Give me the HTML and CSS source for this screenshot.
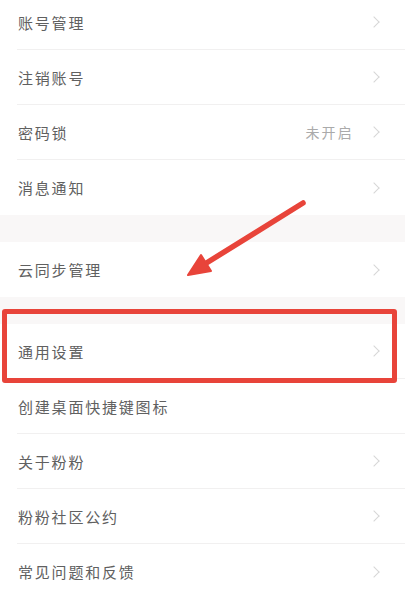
FILE: index.html
```html
<!DOCTYPE html>
<html lang="zh">
<head>
    <meta charset="UTF-8">
    <meta name="viewport" content="width=device-width, initial-scale=1.0">
    <title>设置</title>
    <link rel="stylesheet" href="styles.css">
</head>
<body>

    <div class="page">
        <div class="group first">
            <div class="row"><span class="label">账号管理</span><span class="chev"></span></div>
            <div class="row"><span class="label">注销账号</span><span class="chev"></span></div>
            <div class="row"><span class="label">密码锁</span><span class="value">未开启</span><span class="chev"></span></div>
            <div class="row"><span class="label">消息通知</span><span class="chev"></span></div>
        </div>

        <div class="gap"></div>

        <div class="group">
            <div class="row"><span class="label">云同步管理</span><span class="chev"></span></div>
        </div>

        <div class="gap"></div>

        <div class="group">
            <div class="row"><span class="label">通用设置</span><span class="chev"></span></div>
            <div class="row"><span class="label">创建桌面快捷键图标</span></div>
            <div class="row"><span class="label">关于粉粉</span><span class="chev"></span></div>
            <div class="row"><span class="label">粉粉社区公约</span><span class="chev"></span></div>
            <div class="row"><span class="label">常见问题和反馈</span><span class="chev"></span></div>
        </div>

        <!-- annotations drawn over the screenshot -->
        <div class="mark-box"></div>
        <svg class="mark-arrow" width="405" height="596" viewBox="0 0 405 596">
            <line x1="303" y1="203" x2="200" y2="267" stroke="#e8443a" stroke-width="5.5" stroke-linecap="round"/>
            <polygon points="188,275 201,255 211,271" fill="#e8443a" stroke="#e8443a" stroke-width="2" stroke-linejoin="round"/>
        </svg>
    </div>

</body>
</html>
```

FILE: styles.css
```css
html, body {
    margin: 0;
    padding: 0;
    background: #fff;
}
body {
    font-family: "Noto Sans CJK SC", "Noto Sans", sans-serif;
    color: #606060;
    overflow: hidden;
}
.page {
    position: relative;
    width: 405px;
    height: 596px;
    overflow: hidden;
}
.group {
    background: #fff;
}
.group.first {
    margin-top: -5px;
}
.row {
    height: 55px;
    display: flex;
    align-items: center;
    margin-left: 17px;
    padding-right: 25px;
    border-bottom: 1px solid #f1f0f0;
    box-sizing: border-box;
}
.group .row:last-child {
    border-bottom: none;
}
.label {
    flex: 1;
    padding-left: 1px;
    font-size: 15px;
    letter-spacing: 1.8px;
    color: #606060;
}
.value {
    font-size: 14px;
    letter-spacing: 2.2px;
    color: #aaa;
    margin-right: 16px;
}
.chev {
    width: 7px;
    height: 7px;
    border-top: 1.5px solid #d6d6d6;
    border-right: 1.5px solid #d6d6d6;
    transform: rotate(45deg);
    margin-right: 2px;
}
.gap {
    height: 27px;
    background: #f9f7f7;
}
.mark-box {
    position: absolute;
    left: 2px;
    top: 309px;
    width: 395px;
    height: 74px;
    border: 5px solid #e8443a;
    border-radius: 3px;
    box-sizing: border-box;
}
.mark-arrow {
    position: absolute;
    left: 0;
    top: 0;
}
```
